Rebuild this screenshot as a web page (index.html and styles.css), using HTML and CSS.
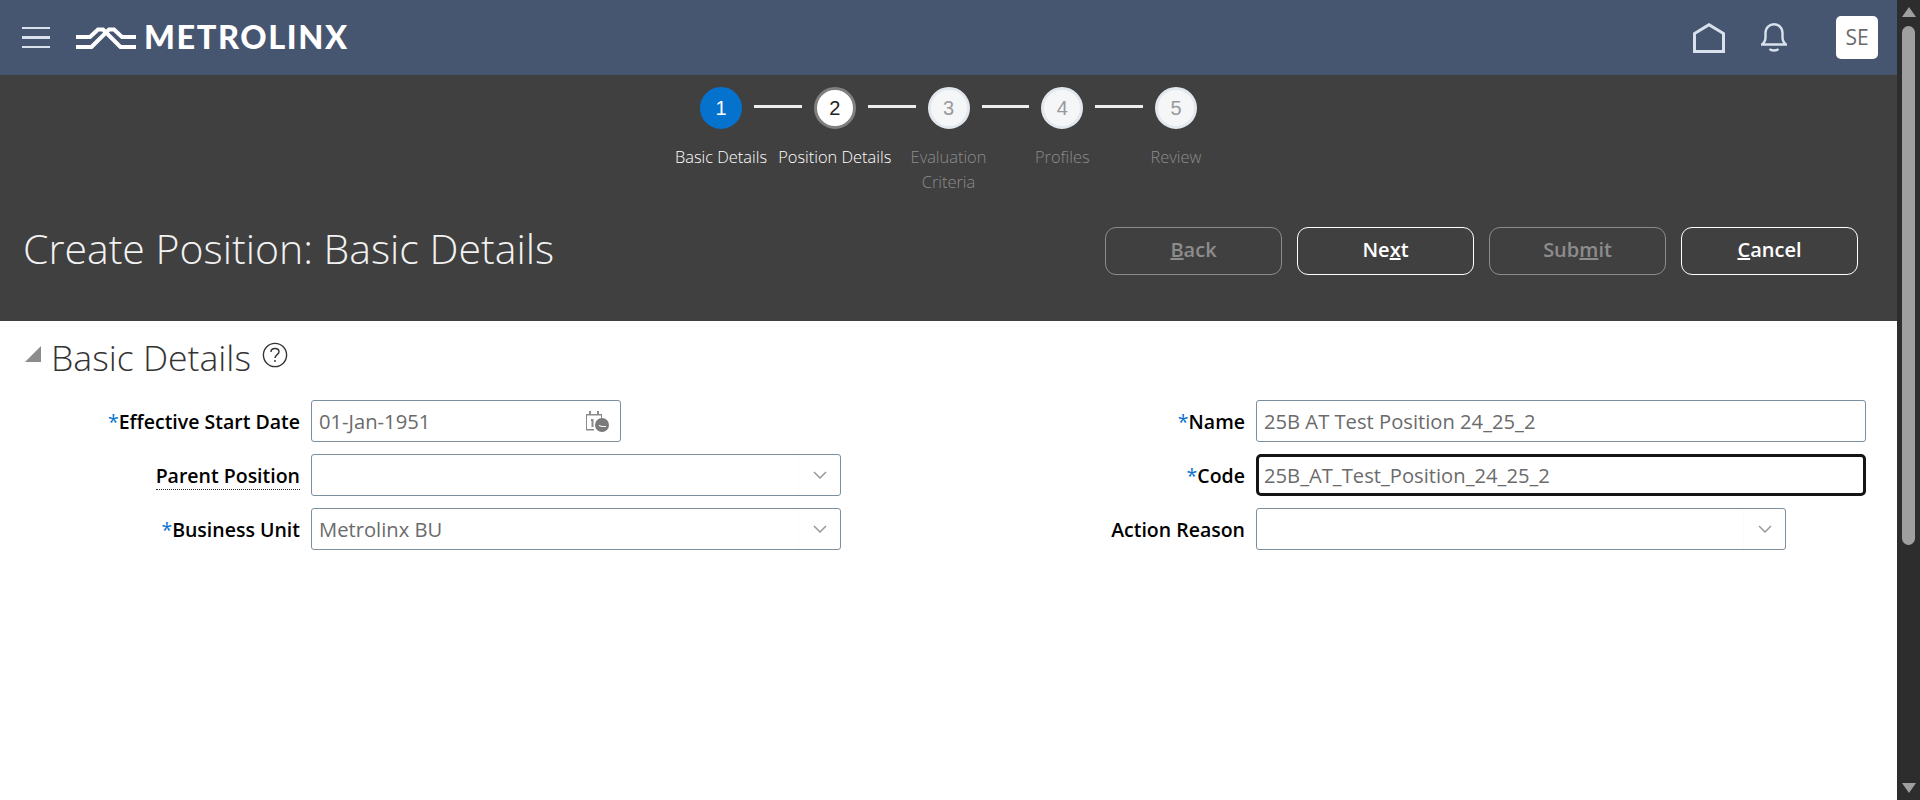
FILE: index.html
```html
<!DOCTYPE html>
<html>
<head>
	<title>Create Position: Basic Details</title>
	<link rel="stylesheet" href="styles.css">
</head>
<body>
	<div class="page">
		<div class="main">
			<div class="topbar">
				<div class="hamburger"><span></span><span></span><span></span></div>
				<svg class="logo-mark" viewBox="0 0 60 24" fill="none" stroke="#fff" stroke-width="4">
					<path d="M0 11H14L22 3.5H27L44.5 21H60"/>
					<path d="M0 21H15.5L33 3.5H38L46 11H60"/>
				</svg>
				<div class="logo-text">METROLINX</div>
				<div class="top-icons">
					<svg class="home-icon" viewBox="0 0 32 30" fill="none" stroke="#d9e2ec" stroke-width="3">
						<path d="M1.5 28.5V10.5L16 1.7L30.5 10.5V28.5Z"/>
					</svg>
					<svg class="bell-icon" viewBox="0 0 26 29" fill="none" stroke="#d9e2ec" stroke-width="2.4">
						<path d="M1 21.5H25C22.5 19.5 21.5 18 21.5 14V10C21.5 4.5 17.5 1.2 13 1.2S4.5 4.5 4.5 10V14C4.5 18 3.5 19.5 1 21.5Z"/>
						<path d="M8.5 26C10.5 28 15.5 28 17.5 26"/>
					</svg>
					<div class="avatar">SE</div>
				</div>
			</div>

			<div class="band">
				<div class="stepper">
					<div class="step-circles">
						<div class="circle done">1</div>
						<div class="line"></div>
						<div class="circle current">2</div>
						<div class="line"></div>
						<div class="circle">3</div>
						<div class="line"></div>
						<div class="circle">4</div>
						<div class="line"></div>
						<div class="circle">5</div>
					</div>
					<div class="step-labels">
						<div class="step-label on">Basic Details</div>
						<div class="step-label on">Position Details</div>
						<div class="step-label">Evaluation Criteria</div>
						<div class="step-label">Profiles</div>
						<div class="step-label">Review</div>
					</div>
				</div>
				<div class="title-row">
					<h1>Create Position: Basic Details</h1>
					<div class="buttons">
						<div class="btn off"><u>B</u>ack</div>
						<div class="btn">Ne<u>x</u>t</div>
						<div class="btn off">Sub<u>m</u>it</div>
						<div class="btn"><u>C</u>ancel</div>
					</div>
				</div>
			</div>

			<div class="content">
				<div class="section-head">
					<div class="disclosure"></div>
					<h2>Basic Details</h2>
					<svg class="help-icon" viewBox="0 0 26 26" fill="none" stroke="#333" stroke-width="1.4">
						<circle cx="13" cy="13" r="11.6"/>
						<path d="M9 10C9 7.5 11 6.5 13 6.5C15.2 6.5 17 7.8 17 9.8C17 12.5 13 12.8 13 16"/>
						<path d="M13 18V20"/>
					</svg>
				</div>
				<div class="form">
					<div class="form-col left">
						<div class="row">
							<label><span class="req">*</span>Effective Start Date</label>
							<div class="field date">
								<span class="value">01-Jan-1951</span>
								<svg class="cal-icon" viewBox="0 0 24 22">
									<path d="M1 4H17V8H16V5.5H2V19H9V20.5H1Z" fill="#8a8a8a"/>
									<path d="M4 1H6V4H4ZM12 1H14V4H12Z" fill="#8a8a8a"/>
									<path d="M6 9H8.5V17H6.5V11H6Z" fill="#8a8a8a"/>
									<circle cx="17" cy="15" r="7" fill="#7a7a7a"/>
									<path d="M14 15.5L17 16.5H21" stroke="#fff" stroke-width="1.2" fill="none"/>
								</svg>
							</div>
						</div>
						<div class="row">
							<label><span class="hint">Parent Position</span></label>
							<div class="field select">
								<span class="value"></span>
								<div class="drop"><svg class="chevron" viewBox="0 0 14 8" fill="none" stroke="#999" stroke-width="1.5"><path d="M1 1L7 7L13 1"/></svg></div>
							</div>
						</div>
						<div class="row">
							<label><span class="req">*</span>Business Unit</label>
							<div class="field select">
								<span class="value">Metrolinx BU</span>
								<div class="drop"><svg class="chevron" viewBox="0 0 14 8" fill="none" stroke="#999" stroke-width="1.5"><path d="M1 1L7 7L13 1"/></svg></div>
							</div>
						</div>
					</div>
					<div class="form-col">
						<div class="row">
							<label><span class="req">*</span>Name</label>
							<div class="field wide"><span class="value">25B AT Test Position 24_25_2</span></div>
						</div>
						<div class="row">
							<label><span class="req">*</span>Code</label>
							<div class="field wide focused"><span class="value">25B_AT_Test_Position_24_25_2</span></div>
						</div>
						<div class="row">
							<label>Action Reason</label>
							<div class="field select">
								<span class="value"></span>
								<div class="drop"><svg class="chevron" viewBox="0 0 14 8" fill="none" stroke="#999" stroke-width="1.5"><path d="M1 1L7 7L13 1"/></svg></div>
							</div>
						</div>
					</div>
				</div>
			</div>
		</div>

		<div class="scrollbar">
			<div class="arrow up"></div>
			<div class="thumb"></div>
			<div class="arrow down"></div>
		</div>
	</div>
</body>
</html>
```

FILE: styles.css
```css
html, body {
	height: 100%;
	margin: 0;
	padding: 0;
	overflow: hidden;
}

body {
	background: #fff;
	font-family: "Open Sans", "Noto Sans", sans-serif;
	color: #000;
}

.page {
	display: flex;
	height: 800px;
}

.main {
	flex: 1;
	min-width: 0;
}

/* top bar */
.topbar {
	display: flex;
	align-items: center;
	height: 75px;
	background: #465670;
	padding: 0 19px 0 22px;
	box-sizing: border-box;
}

.hamburger {
	display: flex;
	flex-direction: column;
	gap: 7px;
	width: 28px;
	margin-right: 26px;
}

.hamburger span {
	display: block;
	height: 2.5px;
	background: #d9e2ec;
}

.logo-mark {
	width: 60px;
	height: 24px;
	margin-right: 8px;
}

.logo-text {
	font-family: Lato, sans-serif;
	font-weight: 900;
	font-size: 32.5px;
	letter-spacing: 1.6px;
	color: #fff;
	line-height: 1;
}

.top-icons {
	display: flex;
	align-items: center;
	margin-left: auto;
}

.home-icon {
	width: 32px;
	height: 30px;
	margin-right: 36px;
}

.bell-icon {
	width: 26px;
	height: 29px;
	margin-right: 49px;
}

.avatar {
	width: 42px;
	height: 43px;
	line-height: 43px;
	background: #fff;
	border-radius: 5px;
	text-align: center;
	font-size: 21px;
	color: #6b6b6b;
}

/* dark band */
.band {
	height: 246px;
	background: #404040;
	box-sizing: border-box;
	padding-top: 12px;
}

.step-circles {
	display: flex;
	justify-content: center;
	align-items: center;
}

.circle {
	width: 42px;
	height: 42px;
	line-height: 36px;
	box-sizing: border-box;
	border: 3px solid #e3e8ee;
	border-radius: 50%;
	background: #f4f6f8;
	color: #999;
	text-align: center;
	font-family: "Liberation Sans", sans-serif;
	font-size: 20px;
}

.circle.done {
	background: #0572ce;
	border-color: #0572ce;
	color: #fff;
}

.circle.current {
	background: #fff;
	border-color: #808080;
	color: #222;
}

.line {
	width: 47.75px;
	height: 3px;
	margin: -4px 12px 0;
	background: #eee;
}

.step-labels {
	display: flex;
	justify-content: center;
	margin-top: 15px;
	height: 51px;
}

.step-label {
	width: 113.75px;
	padding: 0 12px;
	box-sizing: border-box;
	text-align: center;
	font-size: 16.4px;
	font-weight: 300;
	line-height: 25px;
	color: #8c8c8c;
	flex: none;
}

.step-label.on {
	padding: 0;
	color: #fff;
	white-space: nowrap;
}

.title-row {
	display: flex;
	justify-content: space-between;
	align-items: center;
	height: 48px;
	margin-top: 32px;
	padding: 0 39px 0 23px;
}

h1 {
	margin: 0 0 7px;
	font-size: 41px;
	line-height: 48px;
	font-weight: 300;
	color: #f2f2f2;
}

.buttons {
	display: flex;
	gap: 15px;
}

.btn {
	width: 177px;
	height: 48px;
	line-height: 43px;
	box-sizing: border-box;
	border: 1px solid #fff;
	border-radius: 11px;
	text-align: center;
	font-size: 20px;
	font-weight: 600;
	color: #fff;
}

.btn.off {
	border-color: #8c8c8c;
	color: #8c8c8c;
}

/* form */
.section-head {
	display: flex;
	align-items: center;
	height: 73px;
	padding-left: 25px;
}

.disclosure {
	width: 0;
	height: 0;
	border-left: 16px solid transparent;
	border-bottom: 16px solid #8c8c8c;
	margin: 0 10px 8px 0;
}

h2 {
	margin: 0 0 2px;
	font-size: 35.6px;
	font-weight: 300;
	color: #333;
}

.help-icon {
	width: 26px;
	height: 26px;
	margin: 0 0 6px 11px;
}

.form {
	display: flex;
	margin-top: 6px;
}

.form-col {
	display: flex;
	flex-direction: column;
	gap: 12px;
}

.form-col.left {
	width: 945px;
}

.row {
	display: flex;
	align-items: center;
	height: 42px;
}

label {
	width: 300px;
	margin-right: 11px;
	text-align: right;
	font-size: 19.5px;
	font-weight: 600;
}

.req {
	color: #0572ce;
	font-weight: 400;
}

.hint {
	border-bottom: 1px dotted #333;
}

.field {
	display: flex;
	align-items: center;
	justify-content: space-between;
	width: 530px;
	height: 42px;
	box-sizing: border-box;
	border: 1px solid #7b8f9f;
	border-radius: 3px;
	background: #fff;
	padding: 0 0 0 7px;
}

.field.date {
	width: 310px;
	padding-right: 11px;
}

.field.wide {
	width: 610px;
}

.field.focused {
	border: 3px solid #161513;
	border-radius: 5px;
	padding-left: 5px;
}

.value {
	font-size: 20.2px;
	color: #6b6b6b;
}

.cal-icon {
	width: 24px;
	height: 22px;
}

.drop {
	display: flex;
	align-items: center;
	justify-content: center;
	width: 41px;
	height: 100%;
	border-left: 1px solid #fbfbfb;
}

.chevron {
	width: 14px;
	height: 8px;
}

/* scrollbar */
.scrollbar {
	display: flex;
	flex-direction: column;
	align-items: center;
	width: 23px;
	background: #2d2d2d;
}

.thumb {
	width: 13px;
	height: 519px;
	margin-top: 9px;
	border-radius: 7px;
	background: #9f9f9f;
}

.arrow {
	width: 0;
	height: 0;
	border-left: 7px solid transparent;
	border-right: 7px solid transparent;
}

.arrow.up {
	margin-top: 7px;
	border-bottom: 10px solid #9f9f9f;
}

.arrow.down {
	margin-top: auto;
	margin-bottom: 7px;
	border-top: 10px solid #9f9f9f;
}
```
